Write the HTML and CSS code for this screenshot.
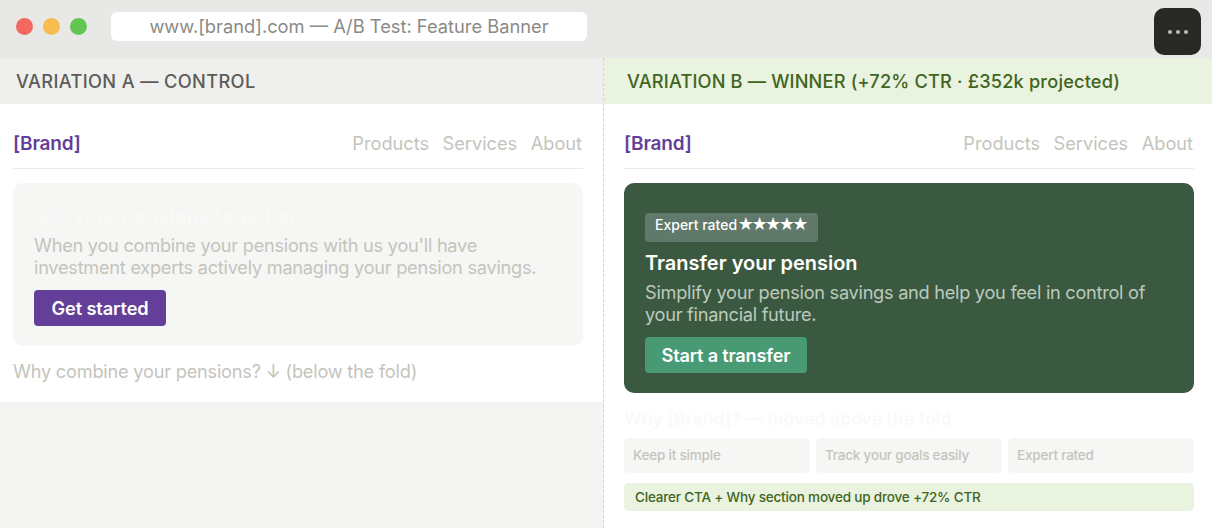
FILE: index.html
```html
<!DOCTYPE html>
<html lang="en">
<head>
<meta charset="utf-8">
<title>A/B Test: Feature Banner</title>
<link rel="stylesheet" href="styles.css">
</head>
<body>
<div class="window">
  <header class="chrome">
    <span class="dot dot-red"></span>
    <span class="dot dot-yellow"></span>
    <span class="dot dot-green"></span>
    <div class="url">www.[brand].com — A/B Test: Feature Banner</div>
  </header>
  <button class="menu" aria-label="More"><span></span><span></span><span></span></button>
  <main class="compare">
    <section class="variation variation-a">
      <div class="label label-a">VARIATION A — CONTROL</div>
      <div class="page">
        <nav class="nav">
          <span class="brand">[Brand]</span>
          <span class="links"><span>Products</span><span>Services</span><span>About</span></span>
        </nav>
        <div class="hero hero-a">
          <h2 class="hero-title ghost-title">Get your pensions together</h2>
          <p class="hero-text">When you combine your pensions with us you'll have investment experts actively managing your pension savings.</p>
          <a class="cta cta-a">Get started</a>
        </div>
        <p class="below">Why combine your pensions? ↓ (below the fold)</p>
      </div>
    </section>
    <section class="variation variation-b">
      <div class="label label-b">VARIATION B — WINNER (+72% CTR · £352k projected)</div>
      <div class="page page-b">
        <nav class="nav">
          <span class="brand">[Brand]</span>
          <span class="links"><span>Products</span><span>Services</span><span>About</span></span>
        </nav>
        <div class="hero hero-b">
          <span class="badge">Expert rated <span class="stars">★★★★★</span></span>
          <h2 class="hero-title">Transfer your pension</h2>
          <p class="hero-text">Simplify your pension savings and help you feel in control of your financial future.</p>
          <a class="cta cta-b">Start a transfer</a>
        </div>
        <h3 class="why">Why [Brand]? — moved above the fold</h3>
        <div class="cards">
          <div class="card">Keep it simple</div>
          <div class="card">Track your goals easily</div>
          <div class="card">Expert rated</div>
        </div>
        <div class="note">Clearer CTA + Why section moved up drove +72% CTR</div>
      </div>
    </section>
  </main>
</div>
</body>
</html>
```

FILE: styles.css
```css
* { box-sizing: border-box; }
html, body { margin: 0; padding: 0; }
body { font-family: Inter, "Liberation Sans", sans-serif; background: #fff; }
.window { position: relative; width: 1212px; height: 528px; overflow: hidden; display: flex; flex-direction: column; background: #fff; }
.chrome { height: 58px; flex: none; background: #e8e8e6; display: flex; align-items: center; padding: 0 0 5px 16px; }
.dot { width: 17px; height: 17px; border-radius: 50%; margin-right: 10px; flex: none; }
.dot-red { background: #f4695f; }
.dot-yellow { background: #f6bc4f; }
.dot-green { background: #62c554; }
.url { width: 476px; height: 29px; margin-left: 14px; background: #fff; border-radius: 6px; color: #8a8a86; font-size: 18.3px; line-height: 28px; text-align: center; }
.menu { position: absolute; left: 1154px; top: 8px; width: 47px; height: 47px; border: 0; border-radius: 10px; background: #282826; display: flex; align-items: center; justify-content: center; gap: 4px; padding: 0; }
.menu span { width: 4px; height: 4px; border-radius: 50%; background: #bdbdb8; }
.compare { flex: 1; display: flex; min-height: 0; }
.variation { display: flex; flex-direction: column; }
.variation-a { width: 604px; background: #f4f4f2; border-right: 1px dashed #d4d4d0; }
.variation-b { width: 608px; background: #fff; }
.label { height: 46px; flex: none; font-size: 18.2px; font-weight: 500; line-height: 46px; white-space: nowrap; }
.label-a { background: #efefed; color: #5c5c58; padding-left: 16px; letter-spacing: 0.38px; }
.label-b { background: #eaf2e0; color: #3f6520; padding-left: 23px; letter-spacing: 0.17px; }
.page { background: #fff; padding: 0 20px 0 13px; height: 298px; }
.page-b { height: auto; flex: 1; padding: 0 18px 0 20px; }
.nav { height: 65px; display: flex; align-items: center; justify-content: space-between; border-bottom: 1px solid #ebebe8; padding-top: 15px; }
.brand { font-size: 19px; font-weight: 600; letter-spacing: -0.2px; color: #633f99; }
.links { display: flex; gap: 13.5px; color: #c4c4bc; font-size: 18.2px; padding: 0 1px 2px 0; }
.hero { margin-top: 14px; border-radius: 10px; padding: 20px 21px; }
.hero-a { background: #f6f6f4; height: 163px; padding-top: 21px; }
.hero-b { background: #3b5940; height: 210px; padding-top: 30px; }
.hero-title { margin: 0; font-size: 20px; line-height: 24px; font-weight: 600; color: #fff; }
.ghost-title { color: #f9f9f7; }
.hero-text { margin: 6px 0 0; font-size: 18.2px; line-height: 22px; letter-spacing: -0.26px; }
.hero-a .hero-text { color: #c4c4bc; }
.hero-b .hero-text { color: #bccabd; letter-spacing: -0.28px; }
.cta { display: inline-block; height: 36px; line-height: 36px; margin-top: 12px; padding: 0 16.5px; border-radius: 4px; color: #fff; font-size: 18.2px; font-weight: 600; letter-spacing: -0.2px; }
.cta-a { background: #633f99; padding: 0 17.5px; letter-spacing: -0.1px; }
.cta-b { background: #489a75; }
.badge { display: inline-block; height: 29px; line-height: 23px; padding: 0 10px; border-radius: 4px; background: #60796a; color: #fff; font-size: 14px; font-weight: 500; white-space: nowrap; }
.stars { font-family: "DejaVu Sans", sans-serif; font-size: 18px; line-height: 20px; letter-spacing: -2.5px; margin-left: -3px; margin-right: 1.5px; }
.hero-b .hero-title { margin-top: 9px; }
.hero-b .hero-text { margin-top: 6px; }
.below { margin: 14px 0 0; font-size: 18.2px; line-height: 22px; letter-spacing: -0.22px; color: #c4c4bc; }
.why { margin: 15px 0 0; font-size: 17.7px; line-height: 22px; font-weight: 600; color: #f9f9f7; }
.cards { display: grid; grid-template-columns: repeat(3, 1fr); gap: 6px; margin-top: 8px; }
.card { height: 35px; line-height: 34px; padding: 0 9px; background: #f6f6f4; border-radius: 5px; color: #c4c4bc; font-size: 13.5px; font-weight: 500; letter-spacing: -0.2px; }
.note { height: 28px; line-height: 28px; margin-top: 10px; padding: 0 11px; background: #eaf2e0; border-radius: 5px; color: #3f6520; font-size: 13.5px; font-weight: 500; letter-spacing: -0.18px; }
```
